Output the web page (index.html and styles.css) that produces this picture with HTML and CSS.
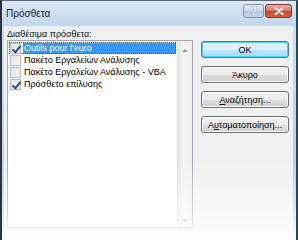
FILE: index.html
```html
<!DOCTYPE html>
<html lang="el">
<head>
    <meta charset="UTF-8">
    <title>Πρόσθετα</title>
    <link rel="stylesheet" href="styles.css">
</head>
<body>
    <div class="window">
        <div class="titlebar">
            <span class="title">Πρόσθετα</span>
            <div class="caption-buttons">
                <button class="cap help">?</button>
                <button class="cap close">
                    <svg width="10" height="8" viewBox="0 0 10 8">
                        <path d="M1.5 1 L8.5 7 M8.5 1 L1.5 7" stroke="#fff" stroke-width="2" stroke-linecap="round"/>
                    </svg>
                </button>
            </div>
        </div>

        <div class="client">
            <div class="label">Διαθέσιμα πρόσθετα:</div>
            <div class="content">
                <div class="listbox">
                    <ul class="items">
                        <li class="item selected">
                            <span class="check checked"></span>
                            <span class="text">Outils pour l'euro</span>
                        </li>
                        <li class="item">
                            <span class="check"></span>
                            <span class="text">Πακέτο Εργαλείων Ανάλυσης</span>
                        </li>
                        <li class="item">
                            <span class="check"></span>
                            <span class="text">Πακέτο Εργαλείων Ανάλυσης - VBA</span>
                        </li>
                        <li class="item">
                            <span class="check checked"></span>
                            <span class="text">Πρόσθετο επίλυσης</span>
                        </li>
                    </ul>
                    <div class="scrollbar">
                        <span class="arrow up"></span>
                        <span class="arrow down"></span>
                    </div>
                </div>

                <div class="buttons">
                    <button class="btn default">OK</button>
                    <button class="btn">Άκυρο</button>
                    <button class="btn"><u>Α</u>ναζήτηση...</button>
                    <button class="btn">Α<u>υ</u>τοματοποίηση...</button>
                </div>
            </div>
        </div>
        <div class="fade"></div>
    </div>
</body>
</html>
```

FILE: styles.css
```css
* {
    margin: 0;
    padding: 0;
    box-sizing: border-box;
}

body {
    width: 298px;
    height: 240px;
    overflow: hidden;
    background: #fff;
    font-family: 'Liberation Sans', Arial, sans-serif;
    font-size: 9px;
    color: #000;
}

.window {
    position: relative;
    width: 298px;
    height: 240px;
    display: flex;
    flex-direction: column;
    background: linear-gradient(180deg, #cfe0f2 0%, #c3d7ec 40%, #b4cbe5 100%);
    border-left: 2px solid #2a3440;
    border-right: 2px solid #1f4d55;
    border-top: 1px solid #56697e;
}

/* Title bar */
.titlebar {
    height: 25px;
    display: flex;
    align-items: flex-start;
    justify-content: space-between;
    padding: 3px 4px 0 4px;
    background: linear-gradient(180deg, #dce8f5 0%, #cddff1 50%, #c2d7ee 100%);
}

.title {
    font-size: 10px;
    color: #1a1a1a;
    margin-top: 4px;
}

.caption-buttons {
    display: flex;
    gap: 1px;
}

.cap {
    height: 14px;
    border: 1px solid #7f93a9;
    border-radius: 3px;
    display: flex;
    align-items: center;
    justify-content: center;
    font-family: 'Liberation Sans', Arial, sans-serif;
    font-weight: bold;
    font-size: 11px;
}

.help {
    width: 21px;
    color: #fff;
    background: linear-gradient(180deg, #e3ecf6 0%, #cadaee 50%, #b3c8e2 51%, #c4d7ec 100%);
    text-shadow: 0 0 2px #4e6a8c;
}

.close {
    width: 27px;
    border-color: #7a3a30;
    background: linear-gradient(180deg, #ebab9a 0%, #dc7d68 45%, #c8492e 50%, #d9603f 100%);
}

/* Client area */
.client {
    flex: 1;
    margin: 0 3px 0 2px;
    padding: 2px 4px 0 3px;
    background: #f0f0f0;
}

.label {
    height: 12px;
    line-height: 12px;
    color: #111;
}

.content {
    display: flex;
}

/* List box */
.listbox {
    width: 187px;
    height: 188px;
    border: 1px solid #a0a7ae;
    background: #fff;
    display: flex;
}

.items {
    list-style: none;
    flex: 1;
    padding-top: 1px;
}

.item {
    height: 12px;
    display: flex;
    align-items: center;
    line-height: 12px;
    padding-left: 2px;
}

.item.selected {
    outline: 1px dotted #555;
    outline-offset: -1px;
    margin: 0 1px;
    padding-left: 1px;
}

.item.selected .text {
    flex: 1;
    background: #3399ff;
    color: #fff;
}

.check {
    width: 11px;
    height: 11px;
    border: 1px solid #b9bec4;
    background: linear-gradient(135deg, #e2e4e6 0%, #f6f6f6 100%);
    margin-right: 2px;
    flex-shrink: 0;
    position: relative;
}

.check.checked::after {
    content: '';
    position: absolute;
    left: 3px;
    top: 0;
    width: 3px;
    height: 7px;
    border-right: 2px solid #2a4e8a;
    border-bottom: 2px solid #2a4e8a;
    transform: rotate(40deg);
}

.text {
    white-space: nowrap;
    padding-left: 1px;
    height: 11px;
    line-height: 11px;
}

.scrollbar {
    width: 15px;
    background: linear-gradient(90deg, #e6e6e6 0%, #f4f4f4 40%, #ececec 100%);
    border-left: 1px solid #e2e2e2;
    display: flex;
    flex-direction: column;
    justify-content: space-between;
    align-items: center;
    padding: 8px 0 5px;
}

.arrow {
    width: 0;
    height: 0;
    border-left: 3px solid transparent;
    border-right: 3px solid transparent;
}

.arrow.up {
    border-bottom: 3px solid #9a9a9a;
}

.arrow.down {
    border-top: 3px solid #9a9a9a;
}

/* Buttons */
.buttons {
    display: flex;
    flex-direction: column;
    gap: 8px;
    margin-left: 8px;
    margin-top: 1px;
}

.btn {
    width: 88px;
    height: 17px;
    border: 1px solid #707070;
    border-radius: 3px;
    background: linear-gradient(180deg, #f2f2f2 0%, #ebebeb 50%, #dddddd 51%, #cfcfcf 100%);
    font-family: 'Liberation Sans', Arial, sans-serif;
    font-size: 9px;
    color: #000;
    box-shadow: inset 0 0 0 1px #fcfcfc;
}

.btn.default {
    border-color: #3c7fb1;
    box-shadow: inset 0 0 0 1px #48d1ff;
    background: linear-gradient(180deg, #eaf6fd 0%, #d9f0fc 50%, #bee6fd 51%, #a7d9f5 100%);
}

/* Fade at the bottom of the capture */
.fade {
    position: absolute;
    left: 0;
    right: 0;
    bottom: 0;
    height: 80px;
    background: linear-gradient(180deg, rgba(255, 255, 255, 0) 0%, rgba(255, 255, 255, 0.6) 70%, rgba(255, 255, 255, 0.95) 100%);
    pointer-events: none;
}
```
